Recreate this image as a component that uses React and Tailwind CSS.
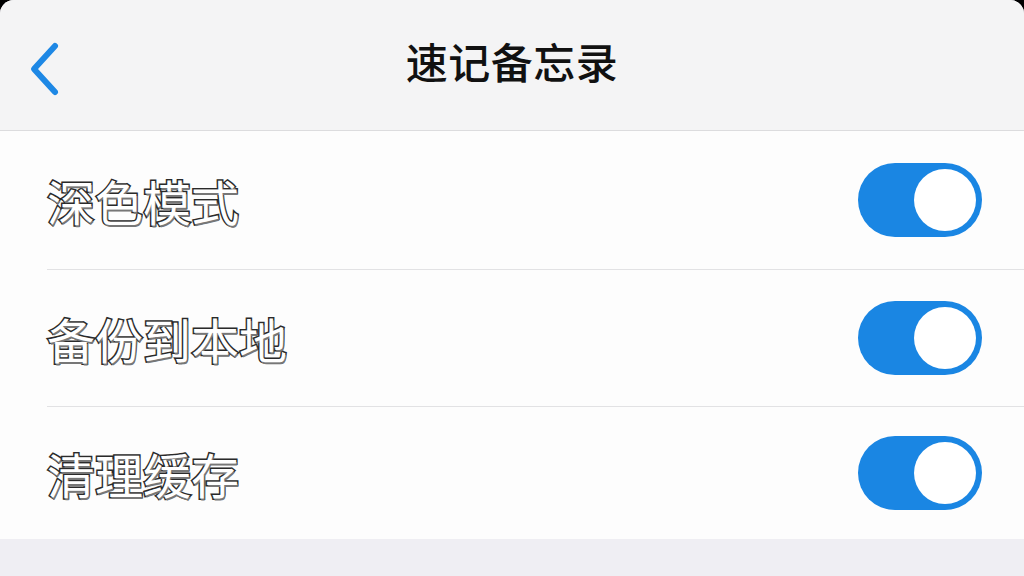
import React, { useState } from "react";

const ROWS = ["深色模式", "备份到本地", "清理缓存"];

const FONT = "font-['Noto_Sans_CJK_SC','Noto_Sans',sans-serif]";

export default function App() {
  const [on, setOn] = useState([true, true, true]);

  return (
    <div className="w-[1024px] h-[576px] bg-black overflow-hidden">
      <div className={`h-full flex flex-col rounded-t-[14px] overflow-hidden bg-[#efeef3] ${FONT}`}>
        {/* nav bar */}
        <div className="h-[131px] shrink-0 bg-[#f4f4f5] border-b border-[#dcdcde] flex items-center relative">
          <button className="absolute left-[22px] top-[36px] p-1">
            <svg width="36" height="60" viewBox="0 0 36 60" fill="none">
              <path d="M29 6 L8 29 L29 52" stroke="#1e88e5" strokeWidth="6" strokeLinecap="round" strokeLinejoin="round" />
            </svg>
          </button>
          <h1 className="flex-1 text-center text-[42px] font-medium text-[#111] leading-none pb-[8px] tracking-[0.5px]">
            速记备忘录
          </h1>
        </div>

        {/* settings list */}
        <div className="bg-[#fdfdfd] pl-[47px]">
          {ROWS.map((label, i) => (
            <div
              key={label}
              className={`flex items-center justify-between pr-[42px] ${
                i === 0 ? "h-[139px]" : i === 1 ? "h-[137px]" : "h-[132px]"
              } ${i < ROWS.length - 1 ? "border-b border-[#e2e2e4]" : ""}`}
            >
              <span className="text-[48px] font-normal leading-none text-white [-webkit-text-stroke:3px_#2a2a2a] [paint-order:stroke_fill] [text-shadow:1px_2px_0_#777]">
                {label}
              </span>
              <button
                onClick={() => setOn(on.map((v, j) => (j === i ? !v : v)))}
                className={`w-[124px] h-[74px] rounded-full p-[6px] flex items-center transition-colors ${
                  on[i] ? "bg-[#1a86e3] justify-end" : "bg-[#e5e5ea] justify-start"
                }`}
              >
                <span className="w-[62px] h-[62px] rounded-full bg-white block" />
              </button>
            </div>
          ))}
        </div>

        <div className="flex-1 bg-[#efeef3]" />
      </div>
    </div>
  );
}
